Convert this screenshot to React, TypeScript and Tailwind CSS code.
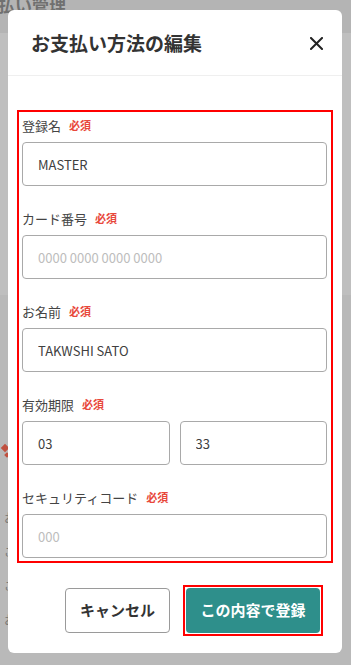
import React from "react";

const font = "font-['Noto_Sans_CJK_JP','Noto_Sans',sans-serif]";

function Label({ text }: { text: string }) {
  return (
    <div className="h-[20px] mb-[7px] flex items-center gap-[8px]">
      <span className="text-[13px] text-[#444444] leading-none">{text}</span>
      <span className="text-[11px] font-bold text-[#e8483b] leading-none">必須</span>
    </div>
  );
}

function Input({ value, placeholder }: { value?: string; placeholder?: string }) {
  return (
    <input
      readOnly
      defaultValue={value}
      placeholder={placeholder}
      className={`${font} w-full h-[44px] border border-[#a9a9a9] rounded-[4px] px-[15px] text-[13px] text-[#404040] placeholder:text-[#bdbdbd] bg-white outline-none`}
    />
  );
}

export default function App() {
  return (
    <div className={`${font} relative w-[351px] h-[665px] overflow-hidden bg-[#bfbfbf]`}>
      {/* background page under overlay */}
      <div className="h-[33px] bg-[#b4b4b4] overflow-hidden">
        <div className="-mt-[7px] -ml-[2px] text-[17px] font-bold text-[#707070] leading-[24px] whitespace-nowrap">
          払い管理
        </div>
      </div>
      <div className="h-[262px]" />
      <div className="h-[370px] bg-[#b9b9b9] flex flex-col pt-[150px] pl-[2px] gap-[14px]">
        <div className="flex flex-col gap-[2px]">
          <div className="w-[6px] h-[6px] bg-[#c0503f] rotate-45" />
          <div className="w-[4px] h-[4px] bg-[#c0503f] rotate-45 ml-[3px]" />
        </div>
        <div className="text-[12px] text-[#777] leading-[14px] pl-[2px] mt-[40px]">お</div>
        <div className="text-[12px] text-[#777] leading-[14px] pl-[2px] mt-[6px]">ご</div>
        <div className="text-[12px] text-[#777] leading-[14px] pl-[2px] mt-[6px]">ご</div>
        <div className="text-[12px] text-[#777] leading-[14px] pl-[2px] mt-[6px]">お</div>
      </div>

      {/* modal */}
      <div className="absolute left-[8px] top-[10px] w-[334px] h-[643px] bg-white rounded-[6px] flex flex-col">
        <div className="h-[66px] flex items-center justify-between pl-[23px] pr-[19px] border-b border-[#efefef]">
          <h2 className="text-[19px] font-bold text-[#333333] leading-none">お支払い方法の編集</h2>
          <svg width="13" height="13" viewBox="0 0 13 13" className="mt-[2px]">
            <path d="M1 1L12 12M12 1L1 12" stroke="#222" strokeWidth="2" strokeLinecap="square" />
          </svg>
        </div>

        <div className="pt-[34px] px-[9px]">
          <div className="border-2 border-[#ff0000] pt-[3px] pb-[3px] pl-[3px] pr-[4px] flex flex-col gap-[22px]">
            <div>
              <Label text="登録名" />
              <Input value="MASTER" />
            </div>
            <div>
              <Label text="カード番号" />
              <Input placeholder="0000 0000 0000 0000" />
            </div>
            <div>
              <Label text="お名前" />
              <Input value="TAKWSHI SATO" />
            </div>
            <div>
              <Label text="有効期限" />
              <div className="flex gap-[10px]">
                <div className="flex-1">
                  <Input value="03" />
                </div>
                <div className="flex-1">
                  <Input value="33" />
                </div>
              </div>
            </div>
            <div>
              <Label text="セキュリティコード" />
              <Input placeholder="000" />
            </div>
          </div>
        </div>

        <div className="mt-[22px] flex justify-end items-center gap-[13px] pr-[19px]">
          <button className="w-[105px] h-[45px] border border-[#9a9a9a] rounded-[4px] bg-white text-[15px] font-bold text-[#333333]">
            キャンセル
          </button>
          <div className="border-2 border-[#ff0000] p-px">
            <button className="w-[134px] h-[45px] rounded-[4px] bg-[#2e8f8b] text-[15px] font-bold text-white">
              この内容で登録
            </button>
          </div>
        </div>
      </div>
    </div>
  );
}
